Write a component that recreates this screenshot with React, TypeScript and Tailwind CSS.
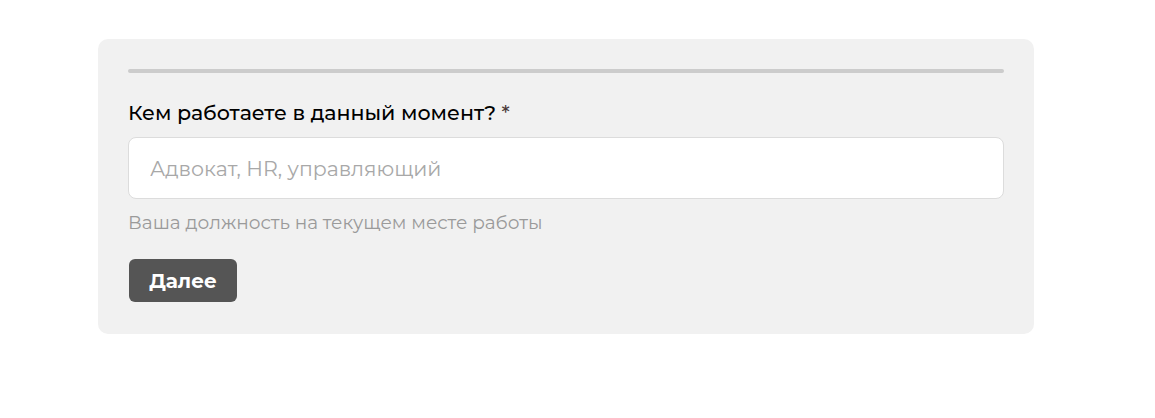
import React, { useState } from "react";

export default function App() {
  const [value, setValue] = useState("");

  return (
    <div className="min-h-[418px] bg-white font-['Montserrat','Noto_Sans',sans-serif] pt-[39px] pl-[98px]">
      <div className="w-[936px] rounded-[10px] bg-[#f1f1f1] px-[30px] pt-[30px] pb-[32px]">
        <div className="h-[4px] w-full rounded-full bg-[#cccccc]" />
        <label className="mt-[28px] block text-[20.6px] leading-[24px] font-medium text-black">
          Кем работаете в данный момент? <span className="text-[#4a3a3a]">*</span>
        </label>
        <input
          value={value}
          onChange={(e) => setValue(e.target.value)}
          placeholder="Адвокат, HR, управляющий"
          className="mt-[12px] block h-[62px] w-full rounded-[8px] border border-[#dcdcdc] bg-white px-[21px] text-[20.5px] text-black outline-none placeholder:text-[#a8a8a8]"
        />
        <p className="mt-[14px] text-[18.5px] leading-[20px] text-[#9a9a9a]">
          Ваша должность на текущем месте работы
        </p>
        <button className="mt-[26px] ml-px h-[43px] w-[108px] rounded-[6px] bg-[#555555] text-[20px] font-bold text-white">
          Далее
        </button>
      </div>
    </div>
  );
}
